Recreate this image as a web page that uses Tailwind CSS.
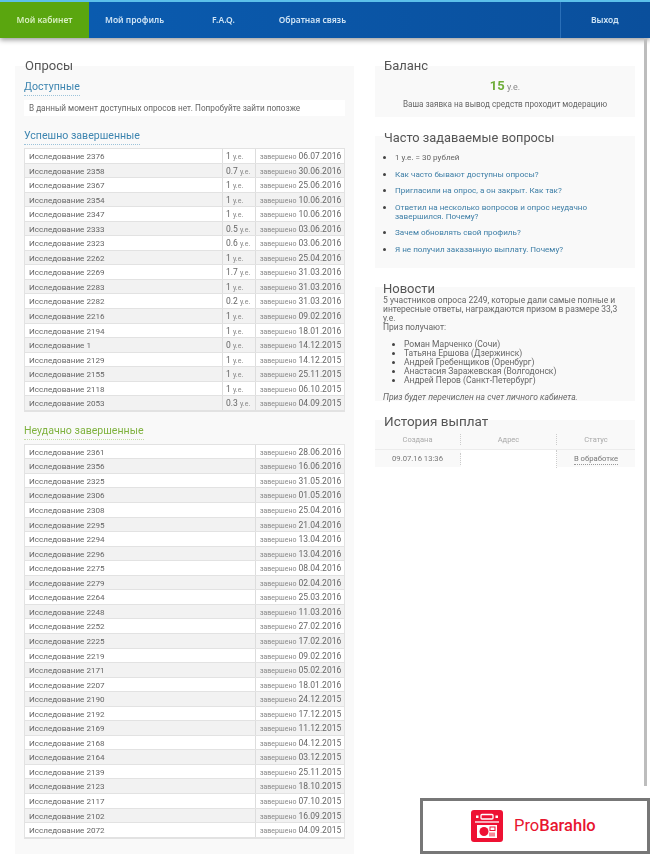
<!DOCTYPE html>
<html lang="ru">
<head>
<meta charset="utf-8">
<title>Мой кабинет</title>
<script src="https://cdn.jsdelivr.net/npm/@tailwindcss/browser@4"></script>
</head>
<body class="bg-white">
<div class="relative w-[650px] h-[854px] overflow-hidden font-['Roboto','Noto_Sans',sans-serif] text-[#555]">

  <!-- top nav -->
  <header class="h-[38px] border-t-2 border-[#5cc0ea] bg-gradient-to-r from-[#0a5db2] to-[#0a4f9c] shadow-[0_2px_5px_rgba(0,0,0,0.4)] flex items-stretch font-['Noto_Sans',sans-serif] text-[8.5px] font-semibold text-[#cfe4f5] blur-[0.4px]">
    <a class="w-[89px] bg-[#5aa60f] text-[#d8efc0] flex items-center justify-center">Мой кабинет</a>
    <a class="ml-[16px] flex items-center">Мой профиль</a>
    <a class="ml-[48px] flex items-center">F.A.Q.</a>
    <a class="ml-[44px] flex items-center">Обратная связь</a>
    <a class="ml-auto w-[90px] border-l border-[#2a6fb8] pl-[30px] flex items-center">Выход</a>
  </header>

  <!-- scrollbar strip -->
  <div class="absolute right-[3px] top-[38px] w-[3px] h-[748px] bg-[#bdbdbd]"></div>

  <main class="flex items-start gap-[21px] pl-[15px] pt-[20px] blur-[0.4px]">
    <!-- left column -->
    <section class="w-[339px] h-[800px] bg-[#f9f9f9] px-[9px] mt-[8px]">
      <h2 class="text-[13px] leading-[18px] -mt-[9px] ml-[1px] text-[#555]">Опросы</h2>
      <h3 class="mt-[4px] text-[10.6px] leading-[16px] text-[#3d85b0] w-fit border-b border-dotted border-[#9cc3da]">Доступные</h3>
      <div class="mt-[4px] h-[16px] bg-white px-[5px] text-[8.2px] leading-[16px] text-[#666]">В данный момент доступных опросов нет. Попробуйте зайти попозже</div>

      <h3 class="mt-[12px] text-[10.6px] leading-[16px] text-[#3d85b0] w-fit border-b border-dotted border-[#9cc3da]">Успешно завершенные</h3>
      <div id="done" class="mt-[3px] border border-[#e2e2e2] text-[8.1px] text-[#666]"></div>

      <h3 class="mt-[11px] text-[10.6px] leading-[16px] text-[#7fb23f] w-fit border-b border-dotted border-[#c4dca6]">Неудачно завершенные</h3>
      <div id="failed" class="mt-[4px] border border-[#e2e2e2] text-[8.1px] text-[#666]"></div>
    </section>

    <!-- right column -->
    <aside class="w-[260px] flex flex-col gap-[19px] mt-[8px]">
      <div class="h-[51px] bg-[#f9f9f9] text-center">
        <h2 class="text-left pl-[9px] -mt-[9px] text-[13px] leading-[18px]">Баланс</h2>
        <p class="mt-[3px] text-[9px] leading-[16px] text-[#888]"><b class="text-[13px] text-[#6fae3a]">15</b> у.е.</p>
        <p class="mt-[3px] text-[8.15px] leading-[12px] text-[#666]">Ваша заявка на вывод средств проходит модерацию</p>
      </div>

      <div class="h-[132px] bg-[#f9f9f9] px-[9px]">
        <h2 class="-mt-[7px] text-[12.8px] leading-[18px]">Часто задаваемые вопросы</h2>
        <ul class="mt-[6px] pl-[11px] list-disc text-[8.1px] leading-[9px] text-[#3d7ea6] marker:text-[#444]">
          <li class="text-[#666]">1 у.е. = 30 рублей</li>
          <li class="mt-[7.5px]">Как часто бывают доступны опросы?</li>
          <li class="mt-[7.5px]">Пригласили на опрос, а он закрыт. Как так?</li>
          <li class="mt-[7.5px]">Ответил на несколько вопросов и опрос неудачно<br>завершился. Почему?</li>
          <li class="mt-[7.5px]">Зачем обновлять свой профиль?</li>
          <li class="mt-[7.5px]">Я не получил заказанную выплату. Почему?</li>
        </ul>
      </div>

      <div class="h-[114px] bg-[#f9f9f9] px-[8px] text-[8.5px] leading-[9px] text-[#666]">
        <h2 class="-mt-[6px] text-[13px] leading-[15px] text-[#555]">Новости</h2>
        <p class="w-[245px]">5 участников опроса 2249, которые дали самые полные и<br>интересные ответы, награждаются призом в размере 33,3 у.е.<br>Приз получают:</p>
        <ul class="mt-[8px] pl-[21px] list-disc marker:text-[#444]">
          <li>Роман Марченко (Сочи)</li>
          <li>Татьяна Ершова (Дзержинск)</li>
          <li>Андрей Гребенщиков (Оренбург)</li>
          <li>Анастасия Заражевская (Волгодонск)</li>
          <li>Андрей Перов (Санкт-Петербург)</li>
        </ul>
        <p class="mt-[8px] italic">Приз будет перечислен на счет личного кабинета.</p>
      </div>

      <div class="h-[47px] bg-[#f9f9f9]">
        <h2 class="-mt-[8px] pl-[9px] text-[13.5px] leading-[18px]">История выплат</h2>
        <div class="grid grid-cols-[86px_96px_78px] h-[20px] items-center text-center text-[7.5px] text-[#aaa] border-b border-[#ececec]">
          <span class="border-r border-dotted border-[#ccc]">Создана</span>
          <span class="border-r border-dotted border-[#ccc]">Адрес</span>
          <span>Статус</span>
        </div>
        <div class="grid grid-cols-[86px_96px_78px] h-[18px] items-center text-center text-[7.7px] text-[#777]">
          <span class="border-r border-dotted border-[#ccc]">09.07.16 13:36</span>
          <span class="bg-white h-full border-r border-dotted border-[#ccc]"></span>
          <span class="justify-self-center border-b border-dotted border-[#999] leading-[10px]">В обработке</span>
        </div>
      </div>
    </aside>
  </main>

  <!-- ad overlay -->
  <div class="absolute right-0 bottom-0 w-[230px] h-[56px] border-[3px] border-[#777] bg-white flex items-center pl-[48px] gap-[11px]">
    <svg width="32" height="32" viewBox="0 0 32 32" class="shrink-0">
      <rect width="32" height="32" rx="3" fill="#ee1133"/>
      <rect x="5" y="5.5" width="2.5" height="2.5" fill="#fff"/>
      <rect x="24.5" y="5.5" width="2.5" height="2.5" fill="#fff"/>
      <rect x="10" y="4.5" width="12" height="4.5" rx="1" fill="none" stroke="#fff" stroke-width="1.3"/>
      <path d="M4 12h24" stroke="#fff" stroke-width="1.3"/>
      <rect x="6" y="15" width="20" height="13" fill="#fff"/>
      <circle cx="13" cy="21.5" r="4.5" fill="#ee1133"/>
      <rect x="19" y="17" width="5" height="3.5" fill="none" stroke="#ee1133"/>
      <path d="M19 22.5v4M21 22.5v4M23 22.5v4" stroke="#ee1133"/>
    </svg>
    <span class="font-['Roboto',sans-serif] text-[16.5px] text-[#e8152f]">Pro<span class="font-medium">Barahlo</span></span>
  </div>
</div>

<script>
  const done = [
    ["2376","1","06.07.2016"],["2358","0.7","30.06.2016"],["2367","1","25.06.2016"],["2354","1","10.06.2016"],
    ["2347","1","10.06.2016"],["2333","0.5","03.06.2016"],["2323","0.6","03.06.2016"],["2262","1","25.04.2016"],
    ["2269","1.7","31.03.2016"],["2283","1","31.03.2016"],["2282","0.2","31.03.2016"],["2216","1","09.02.2016"],
    ["2194","1","18.01.2016"],["1","0","14.12.2015"],["2129","1","14.12.2015"],["2155","1","25.11.2015"],
    ["2118","1","06.10.2015"],["2053","0.3","04.09.2015"]
  ];
  const failed = [
    ["2361","28.06.2016"],["2356","16.06.2016"],["2325","31.05.2016"],["2306","01.05.2016"],["2308","25.04.2016"],
    ["2295","21.04.2016"],["2294","13.04.2016"],["2296","13.04.2016"],["2275","08.04.2016"],["2279","02.04.2016"],
    ["2264","25.03.2016"],["2248","11.03.2016"],["2252","27.02.2016"],["2225","17.02.2016"],["2219","09.02.2016"],
    ["2171","05.02.2016"],["2207","18.01.2016"],["2190","24.12.2015"],["2192","17.12.2015"],["2169","11.12.2015"],
    ["2168","04.12.2015"],["2164","03.12.2015"],["2139","25.11.2015"],["2123","18.10.2015"],["2117","07.10.2015"],
    ["2102","16.09.2015"],["2072","04.09.2015"]
  ];

  const dateCell = (d) => `<span class="w-[89px] pl-[4px] border-l border-[#ddd] whitespace-nowrap text-[8.5px]"><span class="text-[7px] text-[#888]">завершено</span> ${d}</span>`;
  const rowClass = (i) => `flex h-[14.55px] leading-[14px] items-stretch border-b border-[#e2e2e2] ${i % 2 ? "bg-[#f2f2f2]" : "bg-white"}`;

  document.getElementById("done").innerHTML = done.map(([n, s, d], i) => `
    <div class="${rowClass(i)}">
      <span class="flex-1 pl-[4px]">Исследование ${n}</span>
      <span class="w-[33px] pl-[3px] border-l border-[#ddd] whitespace-nowrap text-[8.5px]">${s} <span class="text-[7px] text-[#888]">у.е.</span></span>
      ${dateCell(d)}
    </div>`).join("");

  document.getElementById("failed").innerHTML = failed.map(([n, d], i) => `
    <div class="${rowClass(i)}">
      <span class="flex-1 pl-[4px]">Исследование ${n}</span>
      ${dateCell(d)}
    </div>`).join("");
</script>
</body>
</html>
